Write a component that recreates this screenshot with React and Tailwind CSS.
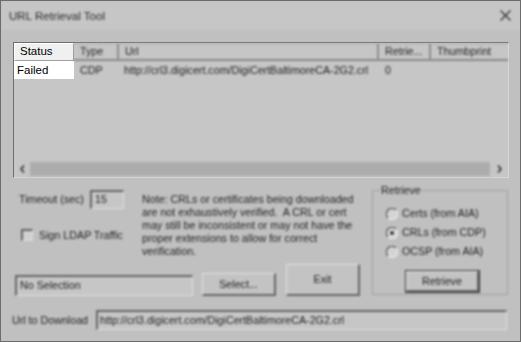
import React from "react";

function Radio({ checked }) {
  return (
    <svg width="12" height="12" viewBox="0 0 12 12" className="shrink-0">
      <circle cx="6" cy="6" r="5.5" fill="#d4d4d4" />
      <path d="M10 2 A5.5 5.5 0 0 0 2 10" fill="none" stroke="#5a5a5a" strokeWidth="1.3" />
      <path d="M2 10 A5.5 5.5 0 0 0 10 2" fill="none" stroke="#e6e6e6" strokeWidth="1.3" />
      {checked && <circle cx="6" cy="6" r="1.8" fill="#111" />}
    </svg>
  );
}

function Sunken({ className, children }) {
  return (
    <div
      className={
        "border-t-2 border-l-2 border-t-[#666] border-l-[#666] border-r border-b border-r-[#dedede] border-b-[#dedede] bg-[#c6c6c6] " +
        className
      }
    >
      {children}
    </div>
  );
}

function Button({ className, children }) {
  return (
    <div
      className={
        "flex items-center justify-center border-t border-l border-t-[#e2e2e2] border-l-[#e2e2e2] border-r-2 border-b-2 border-r-[#666] border-b-[#666] bg-[#c3c3c3] text-[#222] " +
        className
      }
    >
      {children}
    </div>
  );
}

export default function App() {
  const url = "http://crl3.digicert.com/DigiCertBaltimoreCA-2G2.crl";
  return (
    <div className="w-[521px] h-[342px] bg-[#c0c0c0] border border-[#6c6c6c] flex flex-col font-['Liberation_Sans',Arial,sans-serif] text-[10.7px] text-[#222] overflow-hidden">
      {/* title bar */}
      <div className="h-[29px] shrink-0 bg-[#c6c6c6] flex items-center justify-between pl-[8px] pr-[9px] blur-[0.8px]">
        <span className="text-[11.6px] text-[#2a2a2a]">URL Retrieval Tool</span>
        <svg width="11" height="11" viewBox="0 0 11 11">
          <path d="M0.5 0.5 L10.5 10.5 M10.5 0.5 L0.5 10.5" stroke="#333" strokeWidth="1.3" />
        </svg>
      </div>

      <div className="flex flex-col pl-[12px]">
        {/* list view */}
        <div className="mt-[12px] w-[496px] h-[136px] flex flex-col border border-t-[#6e6e6e] border-l-[#6e6e6e] border-r-[#d8d8d8] border-b-[#d8d8d8] bg-[#c6c6c6]">
          <div className="h-[18px] flex shrink-0">
            <div className="w-[60px] bg-[#f0f0f0] border-t border-l border-t-white border-l-white border-r border-b border-r-[#a0a0a0] border-b-[#a0a0a0] pl-[5px] text-[11.5px] leading-[15px] text-black">
              Status
            </div>
            <div className="flex flex-1 blur-[0.8px] border-b-2 border-b-[#8a8a8a] border-t border-t-[#a8a8a8]">
              <div className="w-[45px] pl-[6px] border-r-2 border-r-[#8e8e8e] leading-[15px]">Type</div>
              <div className="w-[260px] pl-[6px] border-r-2 border-r-[#8e8e8e] leading-[15px]">Url</div>
              <div className="w-[52px] pl-[6px] border-r-2 border-r-[#8e8e8e] leading-[15px]">Retrie...</div>
              <div className="flex-1 pl-[6px] leading-[15px]">Thumbprint</div>
            </div>
          </div>
          <div className="h-[18px] flex shrink-0">
            <div className="w-[60px] bg-white pl-[3px] text-[11.5px] leading-[18px] text-black">Failed</div>
            <div className="flex flex-1 blur-[0.8px] leading-[18px]">
              <div className="w-[45px] pl-[6px]">CDP</div>
              <div className="w-[260px] pl-[5px]">{url}</div>
              <div className="w-[52px] pl-[6px]">0</div>
            </div>
          </div>
          <div className="flex-1" />
          <div className="h-[15px] shrink-0 flex items-center blur-[0.8px] mb-[1px]">
            <div className="w-[16px] flex justify-center">
              <svg width="5" height="8" viewBox="0 0 5 8">
                <path d="M4 0.5 L1 4 L4 7.5" fill="none" stroke="#222" strokeWidth="1.4" />
              </svg>
            </div>
            <div className="flex-1 h-[14px] bg-[#acacac]" />
            <div className="w-[18px] flex justify-center">
              <svg width="5" height="8" viewBox="0 0 5 8">
                <path d="M1 0.5 L4 4 L1 7.5" fill="none" stroke="#222" strokeWidth="1.4" />
              </svg>
            </div>
          </div>
        </div>

        {/* lower area */}
        <div className="flex mt-[8px] h-[111px] blur-[0.8px]">
          <div className="w-[359px] flex flex-col justify-between pt-[4px] pb-[1px]">
            <div className="flex">
              <div className="w-[129px] flex flex-col">
                <div className="flex items-center">
                  <span className="w-[77px] pl-[6px]">Timeout (sec)</span>
                  <Sunken className="w-[34px] h-[19px] pl-[3px] leading-[14px]">15</Sunken>
                </div>
                <div className="flex items-center mt-[18px] pl-[8px]">
                  <Sunken className="w-[12px] h-[12px] bg-[#d0d0d0]" />
                  <span className="ml-[6px]">Sign LDAP Traffic</span>
                </div>
              </div>
              <div className="mt-[3px] leading-[13px]">
                Note: CRLs or certificates being downloaded
                <br />
                are not exhaustively verified.&nbsp; A CRL or cert
                <br />
                may still be inconsistent or may not have the
                <br />
                proper extensions to allow for correct
                <br />
                verification.
              </div>
            </div>
            <div className="flex items-end">
              <Sunken className="ml-[2px] w-[178px] h-[21px] pl-[3px] leading-[17px]">No Selection</Sunken>
              <Button className="ml-[9px] w-[74px] h-[23px]">Select...</Button>
              <Button className="ml-[10px] w-[74px] h-[32px]">Exit</Button>
            </div>
          </div>

          <fieldset className="w-[136px] h-[111px] border border-[#a2a2a2] -mt-[2px]">
            <legend className="ml-[7px] px-[1px] leading-[12px]">Retrieve</legend>
            <div className="flex flex-col pl-[13px] mt-[8px]">
              <div className="flex items-center h-[19px]">
                <Radio />
                <span className="ml-[4px]">Certs (from AIA)</span>
              </div>
              <div className="flex items-center h-[19px]">
                <Radio checked />
                <span className="ml-[4px]">CRLs (from CDP)</span>
              </div>
              <div className="flex items-center h-[19px]">
                <Radio />
                <span className="ml-[4px]">OCSP (from AIA)</span>
              </div>
            </div>
            <div className="ml-[32px] mt-[9px] w-[75px] h-[23px] border border-[#333] flex">
              <Button className="flex-1">Retrieve</Button>
            </div>
          </fieldset>
        </div>

        {/* url row */}
        <div className="flex items-center mt-[13px] blur-[0.8px]">
          <span className="w-[84px] -ml-[1px]">Url to Download</span>
          <Sunken className="w-[411px] h-[20px] pl-[2px] leading-[16px]">{url}</Sunken>
        </div>
      </div>
    </div>
  );
}
